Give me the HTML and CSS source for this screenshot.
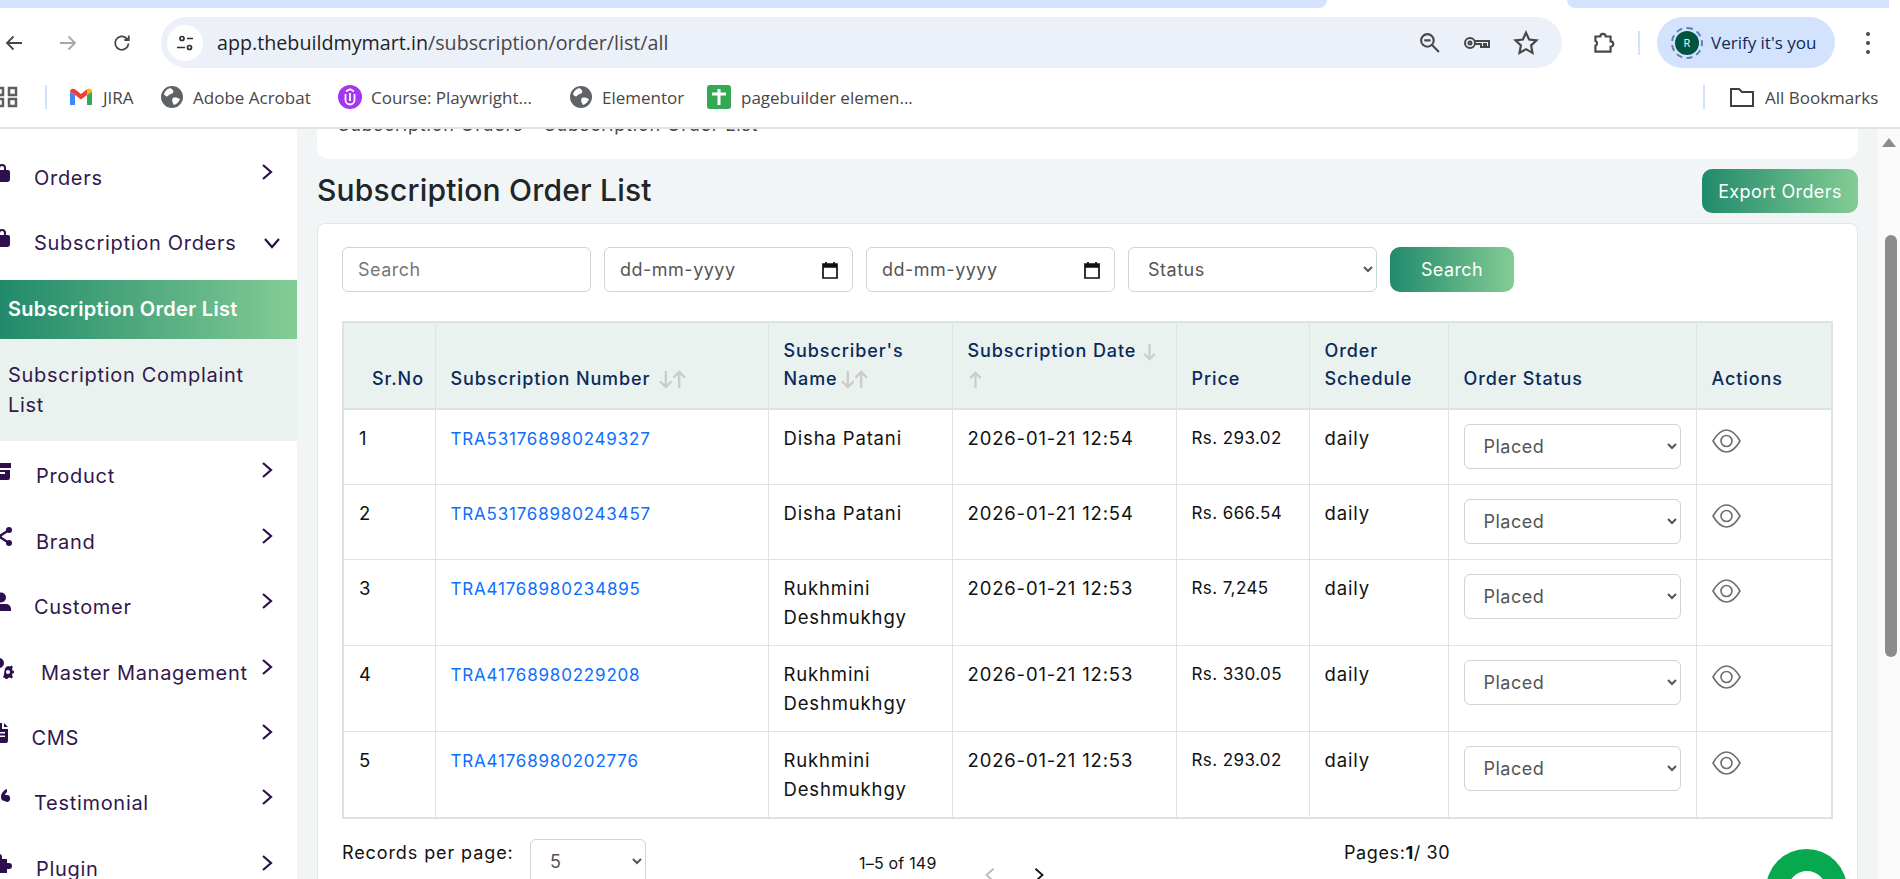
FILE: index.html
```html
<!DOCTYPE html>
<html lang="en">
<head>
  <meta charset="UTF-8" />
  <title>Subscription Order List</title>
  <link rel="stylesheet" href="styles.css">
</head>
<body>

<!-- browser chrome -->
<div class="tabstrip">
  <div class="tab-left"></div>
  <div class="tab-active"></div>
  <div class="tab-right"></div>
</div>

<div class="toolbar">
  <svg class="nav-ic back" viewBox="0 0 20 20"><path d="M18 10H3M9.500 3.500 3 10l6.500 6.500" /></svg>
  <svg class="nav-ic fwd" viewBox="0 0 20 20"><path d="M2 10h15M10.500 3.500 17 10l-6.500 6.500" /></svg>
  <svg class="nav-ic reload" viewBox="0 0 20 20"><path d="M16.500 10.500a6.700 6.700 0 1 1-2-5.200L16.500 7M16.800 2.500V7h-4.500" /></svg>
  <div class="omnibox">
    <span class="site-chip">
      <svg viewBox="0 0 20 20" width="20" height="20"><circle cx="7" cy="5.500" r="2" /><path d="M12 5.500h6M2 14.500h8" /><circle cx="14.500" cy="14.500" r="2" /></svg>
    </span>
    <span class="url">app.thebuildmymart.in<span class="url-path">/subscription/order/list/all</span></span>
    <svg class="omni-ic zoom" viewBox="0 0 22 22"><circle cx="9" cy="9" r="6" /><path d="M6 9h6M13.500 13.500 20 20" /></svg>
    <svg class="omni-ic key" viewBox="0 0 28 18"><circle cx="7" cy="9" r="5" /><circle cx="7" cy="9" r="1.500" /><path d="M12 7h14v6h-3v-3h-2v3h-3v-3h-6" /></svg>
    <svg class="omni-ic star" viewBox="0 0 24 24"><path d="m12 2.500 2.900 6.300 6.800.8-5 4.700 1.300 6.800-6-3.400-6 3.400 1.300-6.800-5-4.700 6.800-.8z" /></svg>
  </div>
  <svg class="nav-ic ext" viewBox="0 0 24 24"><path d="M5 6h4.500a2.500 2.500 0 0 1 5 0H19v4.500a2.500 2.500 0 0 1 0 5V20H5v-5.500c2-.5 2-4 0-4.500z" /></svg>
  <span class="tool-sep"></span>
  <div class="profile">
    <span class="avatar-ring"><span class="avatar">R</span></span>
    <span>Verify it's you</span>
  </div>
  <span class="dots"><i></i><i></i><i></i></span>
</div>

<div class="bookmarks">
  <svg class="bm-apps" viewBox="0 0 22 22"><path d="M-4 2h7v7h-7zM9 2h7v7H9zM-4 13h7v7h-7zM9 13h7v7H9z" /></svg>
  <span class="bm-sep"></span>
  <svg class="bm-ic gmail" viewBox="0 0 24 20">
    <path fill="#4285f4" d="M1 18V4.500L6 8v10z" />
    <path fill="#34a853" d="M18 18V8l5-3.500V18z" />
    <path fill="#ea4335" d="M1 4.500C1 2 4 .8 6 2.300L12 7l6-4.700C20 .8 23 2 23 4.500L18 8l-6 4.500L6 8z" />
    <path fill="#fbbc04" d="M18 2.300C20 .8 23 2 23 4.500L18 8z" />
  </svg>
  <span class="bm-text jira">JIRA</span>
  <svg class="bm-ic globe" viewBox="0 0 22 22"><circle cx="11" cy="11" r="11" fill="#5f6368" /><path fill="#fff" d="M9 2c3 1 4 3 3 5-1 1-4 1-5 3-1 1-3 0-4-2 1-3 3-5 6-6zM12 12c2-1 5 0 7 1-1 3-3 5-6 6-1-2-3-5-1-7z" /></svg>
  <span class="bm-text adobe">Adobe Acrobat</span>
  <svg class="bm-ic udemy" viewBox="0 0 24 24"><circle cx="12" cy="12" r="12" fill="#a435f0" /><path d="M7.500 9v6a4.500 4.500 0 0 0 9 0V9M12 8v8M12 4l4 2.500M12 4 8 6.500" fill="none" stroke="#fff" stroke-width="1.800" /></svg>
  <span class="bm-text course">Course: Playwright...</span>
  <svg class="bm-ic globe" viewBox="0 0 22 22"><circle cx="11" cy="11" r="11" fill="#5f6368" /><path fill="#fff" d="M9 2c3 1 4 3 3 5-1 1-4 1-5 3-1 1-3 0-4-2 1-3 3-5 6-6zM12 12c2-1 5 0 7 1-1 3-3 5-6 6-1-2-3-5-1-7z" /></svg>
  <span class="bm-text elementor">Elementor</span>
  <svg class="bm-ic sheet" viewBox="0 0 24 24"><rect width="24" height="24" rx="3" fill="#34a853" /><path d="M5 9h14M12 4v16" stroke="#fff" stroke-width="3" /></svg>
  <span class="bm-text pagebuilder">pagebuilder elemen...</span>
  <span class="bm-sep all-sep"></span>
  <svg class="bm-ic folder" viewBox="0 0 26 22"><path d="M2 3h8l3 3h11v14H2z" fill="none" stroke="#3c4043" stroke-width="2" /></svg>
  <span class="bm-text all">All Bookmarks</span>
</div>

<!-- page -->
<div class="app">
  <aside class="sidebar">
    <a class="nav-item">
      <svg class="nav-icon" viewBox="0 0 20 20"><path d="M4 7h12a2 2 0 0 1 2 2v7a3 3 0 0 1-3 3H5a3 3 0 0 1-3-3V9a2 2 0 0 1 2-2zM6 7V5a4 4 0 0 1 8 0v2h-2V5a2 2 0 0 0-4 0v2z" /></svg>
      <span class="nav-label ind-orders">Orders</span>
      <svg class="chev" viewBox="0 0 12 18"><path d="m2 2 8 7-8 7" /></svg>
    </a>
    <a class="nav-item">
      <svg class="nav-icon" viewBox="0 0 20 20"><path d="M4 7h12a2 2 0 0 1 2 2v7a3 3 0 0 1-3 3H5a3 3 0 0 1-3-3V9a2 2 0 0 1 2-2zM6 7V5a4 4 0 0 1 8 0v2h-2V5a2 2 0 0 0-4 0v2z" /></svg>
      <span class="nav-label ind-orders">Subscription Orders</span>
      <svg class="chev-down" viewBox="0 0 18 12"><path d="m2 2 7 8 7-8" /></svg>
    </a>
    <div class="subnav">
      <a class="sub-item active">Subscription Order List</a>
      <a class="sub-item">Subscription Complaint List</a>
    </div>
    <a class="nav-item">
      <svg class="nav-icon box" viewBox="0 0 20 20"><path d="M0 2h19v5H0zM1 9h17v8a2 2 0 0 1-2 2H3a2 2 0 0 1-2-2zm5 2v2h7v-2z" /></svg>
      <span class="nav-label ind-product">Product</span>
      <svg class="chev" viewBox="0 0 12 18"><path d="m2 2 8 7-8 7" /></svg>
    </a>
    <a class="nav-item">
      <svg class="nav-icon box" viewBox="0 0 20 20"><circle cx="17" cy="3" r="3" /><circle cx="17" cy="16" r="3" /><circle cx="7" cy="9.500" r="2.500" /><path d="M17 3 7 9.500 17 16M7 9.500 2 4M7 9.500l-5 6" fill="none" stroke="#2e0f4d" stroke-width="2.400" /></svg>
      <span class="nav-label ind-product">Brand</span>
      <svg class="chev" viewBox="0 0 12 18"><path d="m2 2 8 7-8 7" /></svg>
    </a>
    <a class="nav-item">
      <svg class="nav-icon" viewBox="0 0 20 20"><circle cx="9" cy="5.500" r="5" /><path d="M4 12h10a5 5 0 0 1 5 5v2H-1v-2a5 5 0 0 1 5-5z" /></svg>
      <span class="nav-label ind-orders">Customer</span>
      <svg class="chev" viewBox="0 0 12 18"><path d="m2 2 8 7-8 7" /></svg>
    </a>
    <a class="nav-item">
      <svg class="nav-icon cog" viewBox="0 0 26 20"><circle cx="9" cy="5" r="5" /><path d="M3 12h7v8H-1v-4a4 4 0 0 1 4-4z" /><path fill-rule="evenodd" d="m18 8 2 .5 1.500-1 1.500 1.500-1 1.500.5 2 1.500.5v2l-1.500.5-.5 2 1 1.500-1.500 1.500-1.500-1-2 .5-.5 1h-2l-.5-1-2-.5 1-3 .5-4 1-3zm0 4a2 2 0 1 0 0 4 2 2 0 0 0 0-4z" /></svg>
      <span class="nav-label ind-master">Master Management</span>
      <svg class="chev" viewBox="0 0 12 18"><path d="m2 2 8 7-8 7" /></svg>
    </a>
    <a class="nav-item">
      <svg class="nav-icon file" viewBox="0 0 20 20"><path fill-rule="evenodd" d="M-4 0h9v6h6v12a2 2 0 0 1-2 2H-2a2 2 0 0 1-2-2zm3 9v1.500h9V9zm0 3.500V14h9v-1.500zM7 0l4 4H7z" /></svg>
      <span class="nav-label ind-cms">CMS</span>
      <svg class="chev" viewBox="0 0 12 18"><path d="m2 2 8 7-8 7" /></svg>
    </a>
    <a class="nav-item">
      <svg class="nav-icon quote" viewBox="0 0 20 14"><path d="M1 13a4 4 0 0 1-3-4c0-4 2-7 5-8v3C2 5 2 6 2 7a3 3 0 0 1-1 6zM13 13a4 4 0 0 1-4-4c0-4 3-7 6-8v3c-1 1-2 2-2 3h2a3 3 0 0 1 3 3 3 3 0 0 1-5 3z" /></svg>
      <span class="nav-label ind-orders">Testimonial</span>
      <svg class="chev" viewBox="0 0 12 18"><path d="m2 2 8 7-8 7" /></svg>
    </a>
    <a class="nav-item">
      <svg class="nav-icon box" viewBox="0 0 20 20"><path d="M-2 5h6V3a3 3 0 0 1 6 0v2h5v4h2a3 3 0 0 1 0 6h-2v4H-2z" /></svg>
      <span class="nav-label ind-product">Plugin</span>
      <svg class="chev" viewBox="0 0 12 18"><path d="m2 2 8 7-8 7" /></svg>
    </a>
  </aside>

  <main class="main">
    <div class="crumb-card">
      <div class="crumb">Subscription Orders - Subscription Order List</div>
    </div>

    <div class="title-row">
      <h1>Subscription Order List</h1>
      <button class="grad-btn export">Export Orders</button>
    </div>

    <div class="card">
      <div class="filters">
        <input class="field" type="text" placeholder="Search">
        <div class="field date">
          <span>dd-mm-yyyy</span>
          <svg class="cal" viewBox="0 0 16 18"><path d="M1 4h14v13H1zM1 3h14v3H1z" fill="none" stroke="#111" stroke-width="1.700" /><path d="M4 1v3M12 1v3" stroke="#111" stroke-width="1.700" /><rect x="1" y="3" width="14" height="3" fill="#111" /></svg>
        </div>
        <div class="field date">
          <span>dd-mm-yyyy</span>
          <svg class="cal" viewBox="0 0 16 18"><path d="M1 4h14v13H1zM1 3h14v3H1z" fill="none" stroke="#111" stroke-width="1.700" /><path d="M4 1v3M12 1v3" stroke="#111" stroke-width="1.700" /><rect x="1" y="3" width="14" height="3" fill="#111" /></svg>
        </div>
        <select class="field status"><option>Status</option></select>
        <button class="grad-btn search">Search</button>
      </div>

      <table class="orders">
        <colgroup>
          <col class="c-sr"><col class="c-num"><col class="c-name"><col class="c-date">
          <col class="c-price"><col class="c-sched"><col class="c-status"><col class="c-act">
        </colgroup>
        <thead>
          <tr>
            <th class="th-sr">Sr.No</th>
            <th>Subscription Number
              <svg class="sort" viewBox="0 0 30 20"><path d="M8 1v17M2 12l6 6 6-6M22 19V2M16 8l6-6 6 6" /></svg>
            </th>
            <th>Subscriber's<br>Name<svg class="sort" viewBox="0 0 30 20"><path d="M8 1v17M2 12l6 6 6-6M22 19V2M16 8l6-6 6 6" /></svg></th>
            <th>Subscription Date
              <svg class="sort-one" viewBox="0 0 16 20"><path d="M8 1v17M2 12l6 6 6-6" /></svg><br>
              <svg class="sort-one" viewBox="0 0 16 20"><path d="M8 19V2M2 8l6-6 6 6" /></svg>
            </th>
            <th>Price</th>
            <th>Order<br>Schedule</th>
            <th>Order Status</th>
            <th>Actions</th>
          </tr>
        </thead>
        <tbody>
          <tr>
            <td>1</td>
            <td><a href="#">TRA531768980249327</a></td>
            <td>Disha Patani</td>
            <td>2026-01-21 12:54</td>
            <td class="price">Rs. 293.02</td>
            <td>daily</td>
            <td><select class="field row-select"><option>Placed</option></select></td>
            <td><svg class="eye" viewBox="0 0 29 24"><path d="M1 12C5 5 9 1 14.500 1S24 5 28 12c-4 7-8 11-13.500 11S5 19 1 12z" /><circle cx="14.500" cy="12" r="5.500" /></svg></td>
          </tr>
          <tr>
            <td>2</td>
            <td><a href="#">TRA531768980243457</a></td>
            <td>Disha Patani</td>
            <td>2026-01-21 12:54</td>
            <td class="price">Rs. 666.54</td>
            <td>daily</td>
            <td><select class="field row-select"><option>Placed</option></select></td>
            <td><svg class="eye" viewBox="0 0 29 24"><path d="M1 12C5 5 9 1 14.500 1S24 5 28 12c-4 7-8 11-13.500 11S5 19 1 12z" /><circle cx="14.500" cy="12" r="5.500" /></svg></td>
          </tr>
          <tr>
            <td>3</td>
            <td><a href="#">TRA41768980234895</a></td>
            <td>Rukhmini<br>Deshmukhgy</td>
            <td>2026-01-21 12:53</td>
            <td class="price">Rs. 7,245</td>
            <td>daily</td>
            <td><select class="field row-select"><option>Placed</option></select></td>
            <td><svg class="eye" viewBox="0 0 29 24"><path d="M1 12C5 5 9 1 14.500 1S24 5 28 12c-4 7-8 11-13.500 11S5 19 1 12z" /><circle cx="14.500" cy="12" r="5.500" /></svg></td>
          </tr>
          <tr>
            <td>4</td>
            <td><a href="#">TRA41768980229208</a></td>
            <td>Rukhmini<br>Deshmukhgy</td>
            <td>2026-01-21 12:53</td>
            <td class="price">Rs. 330.05</td>
            <td>daily</td>
            <td><select class="field row-select"><option>Placed</option></select></td>
            <td><svg class="eye" viewBox="0 0 29 24"><path d="M1 12C5 5 9 1 14.500 1S24 5 28 12c-4 7-8 11-13.500 11S5 19 1 12z" /><circle cx="14.500" cy="12" r="5.500" /></svg></td>
          </tr>
          <tr>
            <td>5</td>
            <td><a href="#">TRA41768980202776</a></td>
            <td>Rukhmini<br>Deshmukhgy</td>
            <td>2026-01-21 12:53</td>
            <td class="price">Rs. 293.02</td>
            <td>daily</td>
            <td><select class="field row-select"><option>Placed</option></select></td>
            <td><svg class="eye" viewBox="0 0 29 24"><path d="M1 12C5 5 9 1 14.500 1S24 5 28 12c-4 7-8 11-13.500 11S5 19 1 12z" /><circle cx="14.500" cy="12" r="5.500" /></svg></td>
          </tr>
        </tbody>
      </table>

      <div class="pager">
        <span class="rpp">Records per page:</span>
        <select class="field rpp-select"><option>5</option></select>
        <span class="range">1–5 of 149</span>
        <svg class="page-chev prev" viewBox="0 0 12 18"><path d="m10 2-8 7 8 7" /></svg>
        <svg class="page-chev next" viewBox="0 0 12 18"><path d="m2 2 8 7-8 7" /></svg>
        <span class="pages">Pages:<b>1</b>/ 30</span>
      </div>
    </div>

    <div class="chat-btn"><span></span></div>
  </main>

  <div class="scrollbar">
    <span class="sb-up"></span>
    <span class="sb-thumb"></span>
  </div>
</div>

</body>
</html>
```

FILE: styles.css
```css
* {
  box-sizing: border-box;
}

html, body {
  height: 879px;
  overflow: hidden;
}

body {
  margin: 0;
  font-family: Inter, "Open Sans", sans-serif;
  font-size: 16px;
  color: #111;
  background: #fff;
}

/* browser chrome */
.tabstrip {
  display: flex;
  height: 8px;
}

.tab-left {
  width: 1327px;
  background: #d3e3fd;
  border-bottom-right-radius: 8px;
}

.tab-active {
  width: 240px;
}

.tab-right {
  width: 322px;
  background: #d3e3fd;
  border-bottom-left-radius: 8px;
}

.toolbar {
  display: flex;
  align-items: center;
  height: 69px;
  font-family: "Open Sans", sans-serif;
}

.nav-ic {
  flex: none;
  width: 20px;
  height: 20px;
  fill: none;
  stroke: #474747;
  stroke-width: 1.800;
}

.back {
  margin: 0 0 0 4px;
}

.fwd {
  margin-left: 34px;
  stroke: #a8a8a8;
}

.reload {
  margin-left: 34px;
}

.omnibox {
  display: flex;
  align-items: center;
  width: 1401px;
  height: 51px;
  margin-left: 29px;
  padding-left: 6px;
  background: #ecf1f9;
  border-radius: 26px;
}

.site-chip {
  display: flex;
  align-items: center;
  justify-content: center;
  width: 36px;
  height: 36px;
  background: #fff;
  border-radius: 50%;
}

.site-chip svg {
  fill: none;
  stroke: #303030;
  stroke-width: 1.700;
}

.url {
  margin-left: 14px;
  font-size: 19.700px;
  color: #1f1f1f;
}

.url-path {
  color: #474747;
}

.omni-ic {
  flex: none;
  fill: none;
  stroke: #474747;
  stroke-width: 2;
}

.zoom {
  width: 23px;
  height: 23px;
  margin-left: auto;
}

.key {
  width: 28px;
  height: 18px;
  margin-left: 22px;
}

.star {
  width: 26px;
  height: 26px;
  margin: 0 23px 0 22px;
}

.ext {
  width: 26px;
  height: 26px;
  margin-left: 28px;
  stroke-width: 2;
}

.tool-sep {
  width: 2px;
  height: 24px;
  margin-left: 22px;
  background: #d3e3fd;
}

.profile {
  display: flex;
  align-items: center;
  gap: 8px;
  width: 178px;
  height: 51px;
  margin-left: 17px;
  padding-left: 14px;
  background: #d3e3fd;
  border-radius: 26px;
  font-size: 17px;
  color: #0b2a5b;
}

.avatar-ring {
  display: flex;
  align-items: center;
  justify-content: center;
  width: 32px;
  height: 32px;
  border: 2px dashed #5b7fb8;
  border-radius: 50%;
}

.avatar {
  display: flex;
  align-items: center;
  justify-content: center;
  width: 24px;
  height: 24px;
  border-radius: 50%;
  background: #00543f;
  color: #fff;
  font-size: 11px;
}

.dots {
  display: flex;
  flex-direction: column;
  gap: 5px;
  margin-left: 31px;
}

.dots i {
  display: block;
  width: 4px;
  height: 4px;
  border-radius: 50%;
  background: #474747;
}

.bookmarks {
  display: flex;
  align-items: center;
  height: 52px;
  border-bottom: 2px solid #e3e3e3;
  padding-bottom: 10px;
  font-family: "Open Sans", sans-serif;
  font-size: 17px;
  color: #474747;
}

.bm-apps {
  width: 22px;
  height: 22px;
  fill: none;
  stroke: #5f5f5f;
  stroke-width: 2.500;
}

.bm-sep {
  width: 2px;
  height: 24px;
  margin-left: 23px;
  background: #d3e3fd;
}

.bm-ic {
  flex: none;
}

.bm-text {
  white-space: nowrap;
}

.gmail {
  width: 24px;
  height: 20px;
  margin-left: 22px;
}

.jira {
  margin-left: 10px;
  width: 34px;
}

.globe {
  width: 22px;
  height: 22px;
  margin-left: 24px;
}

.adobe {
  width: 120px;
  margin-left: 10px;
}

.udemy {
  width: 24px;
  height: 24px;
  margin-left: 25px;
}

.course {
  width: 160px;
  margin-left: 9px;
}

.elementor {
  width: 81px;
  margin-left: 10px;
}

.course + .globe {
  margin-left: 39px;
}

.sheet {
  width: 24px;
  height: 24px;
  margin-left: 24px;
}

.pagebuilder {
  width: 171px;
  margin-left: 10px;
}

.all-sep {
  margin-left: 791px;
}

.folder {
  width: 26px;
  height: 22px;
  margin-left: 24px;
}

.all {
  margin-left: 10px;
}

/* page */
.app {
  display: flex;
  height: 750px;
  overflow: hidden;
}

.sidebar {
  flex: none;
  width: 297px;
  padding-top: 16px;
  overflow: hidden;
  background: #fff;
  color: #32174d;
  font-size: 20px;
  letter-spacing: 0.7px;
}

.nav-item {
  display: flex;
  align-items: center;
  height: 65.400px;
}

.nav-icon {
  flex: none;
  width: 20px;
  height: 20px;
  margin-left: -8px;
  margin-bottom: 10px;
  fill: #2e0f4d;
  overflow: visible;
}

.nav-icon.cog {
  width: 26px;
  margin-left: -10px;
}

.nav-icon.file {
  margin-left: -3px;
}

.nav-icon.quote {
  height: 14px;
  margin-bottom: 16px;
}

.nav-label {
  white-space: nowrap;
}

.ind-orders {
  margin-left: 22px;
}

.ind-product {
  margin-left: 24px;
}

.ind-master {
  margin-left: 25px;
}

.ind-cms {
  margin-left: 14.500px;
}

.chev {
  flex: none;
  width: 12px;
  height: 18px;
  margin-left: auto;
  margin-right: 24px;
  margin-bottom: 12px;
  fill: none;
  stroke: #2e0f4d;
  stroke-width: 2.200;
}

.chev-down {
  flex: none;
  width: 18px;
  height: 12px;
  margin-left: auto;
  margin-right: 16px;
  fill: none;
  stroke: #2e0f4d;
  stroke-width: 2.200;
}

.subnav {
  margin: 4px 0 3px;
  background: #e9f2ef;
}

.sub-item {
  display: block;
  padding: 14px 8px 15px;
  line-height: 30px;
}

.sub-item + .sub-item {
  padding: 21px 40px 21px 8px;
}

.sub-item.active {
  background: linear-gradient(90deg, #218a6b, #84cc95);
  color: #fff;
  font-weight: 600;
  letter-spacing: 0.3px;
}

.main {
  position: relative;
  flex: none;
  width: 1581px;
  padding: 0 20px;
  overflow: hidden;
  background: #f1f5f6;
}

.crumb-card {
  height: 30px;
  overflow: hidden;
  background: #fff;
  border-radius: 0 0 12px 12px;
}

.crumb {
  margin-top: -18px;
  padding-left: 21px;
  font-size: 18px;
  letter-spacing: 0.8px;
  line-height: 28px;
  color: #444;
}

.title-row {
  display: flex;
  justify-content: space-between;
  height: 64px;
  padding-top: 10px;
}

h1 {
  margin: 0;
  font-size: 30px;
  font-weight: 500;
  letter-spacing: 0.2px;
  line-height: 42px;
  color: #212529;
}

.grad-btn {
  border: none;
  color: #fff;
  font-family: inherit;
  font-size: 18px;
  letter-spacing: 0.4px;
  border-radius: 10px;
  background: linear-gradient(90deg, #218a6b, #84cc95);
}

.export {
  width: 156px;
  height: 44px;
}

.search {
  width: 124px;
  height: 45px;
}

.card {
  height: 700px;
  padding: 23px 24px;
  background: #fff;
  border: 1px solid #e3e6e8;
  border-radius: 8px;
}

.filters {
  display: flex;
  gap: 13px;
}

.field {
  height: 45px;
  padding: 0 15px;
  background: #fff;
  border: 1px solid #ced4da;
  border-radius: 6px;
  font-family: inherit;
  font-size: 18px;
  letter-spacing: 0.5px;
  color: #555;
}

.field::placeholder {
  color: #777;
}

input.field,
.date {
  width: 249px;
}

.date {
  display: flex;
  align-items: center;
  justify-content: space-between;
}

.cal {
  width: 16px;
  height: 18px;
  margin-right: -1px;
}

.status {
  width: 249px;
}

.orders {
  width: 1489px;
  margin-top: 29px;
  table-layout: fixed;
  border-collapse: collapse;
  border: 2px solid #dee2e6;
  font-size: 18.500px;
  letter-spacing: 0.850px;
  line-height: 29px;
}

.c-sr { width: 92px; }
.c-num { width: 333px; }
.c-name { width: 184px; }
.c-date { width: 224px; }
.c-price { width: 133px; }
.c-sched { width: 139px; }
.c-status { width: 248px; }
.c-act { width: 136px; }

.orders th,
.orders td {
  padding: 15px;
  border: 1px solid #dee2e6;
  text-align: left;
}

.orders th {
  vertical-align: bottom;
  padding-top: 14px;
  background: #e9f2ef;
  color: #0b2a5b;
  font-size: 18px;
  font-weight: 500;
  letter-spacing: 0.900px;
  line-height: 28px;
  border-bottom-width: 2px;
}

.orders td {
  vertical-align: top;
  padding-top: 14px;
  padding-bottom: 13px;
}

.orders th.th-sr {
  padding-left: 28px;
}

.orders td a {
  font-size: 17px;
  letter-spacing: 0.800px;
  color: #0d6efd;
  text-decoration: none;
}

.orders td.price {
  font-size: 17px;
  letter-spacing: 0.400px;
}

.sort {
  width: 29px;
  height: 19px;
  margin-left: 2px;
  vertical-align: -4px;
  fill: none;
  stroke: #ccc;
  stroke-width: 2.500;
}

.sort-one {
  width: 15px;
  height: 18px;
  vertical-align: -4px;
  fill: none;
  stroke: #ccc;
  stroke-width: 2.500;
}

.row-select {
  display: block;
  width: 217px;
  margin-bottom: 2px;
}

.eye {
  display: block;
  width: 29px;
  height: 24px;
  margin-top: 5px;
  fill: none;
  stroke: #6e6e6e;
  stroke-width: 1.600;
}

.pager {
  position: relative;
  display: flex;
  height: 62px;
  margin-top: 20px;
  font-size: 18px;
  letter-spacing: 0.900px;
}

.rpp {
  line-height: 27px;
}

.rpp-select {
  position: absolute;
  left: 188px;
  top: 0;
  width: 116px;
}

.range {
  position: absolute;
  left: 517px;
  top: 14px;
  font-size: 16px;
  letter-spacing: 0.200px;
}

.page-chev {
  position: absolute;
  top: 28px;
  width: 12px;
  height: 16px;
  fill: none;
  stroke: #111;
  stroke-width: 2;
}

.prev {
  left: 642px;
  stroke: #bbb;
}

.next {
  left: 691px;
}

.pages {
  position: absolute;
  left: 1002px;
  top: 0;
  letter-spacing: 0.600px;
  line-height: 27px;
}

.chat-btn {
  position: absolute;
  left: 1469px;
  top: 720px;
  display: flex;
  align-items: center;
  justify-content: center;
  width: 81px;
  height: 81px;
  border-radius: 50%;
  background: #06a94d;
}

.chat-btn span {
  width: 38px;
  height: 38px;
  border-radius: 50%;
  background: #fff;
}

.scrollbar {
  flex: none;
  width: 22px;
  background: #fafafa;
  display: flex;
  flex-direction: column;
  align-items: center;
}

.sb-up {
  width: 0;
  height: 0;
  margin-top: 9px;
  border-left: 7px solid transparent;
  border-right: 7px solid transparent;
  border-bottom: 9px solid #8c8c8c;
}

.sb-thumb {
  width: 12px;
  height: 422px;
  margin-top: 88px;
  margin-left: 4px;
  border-radius: 6px;
  background: #8c8c8c;
}
```
